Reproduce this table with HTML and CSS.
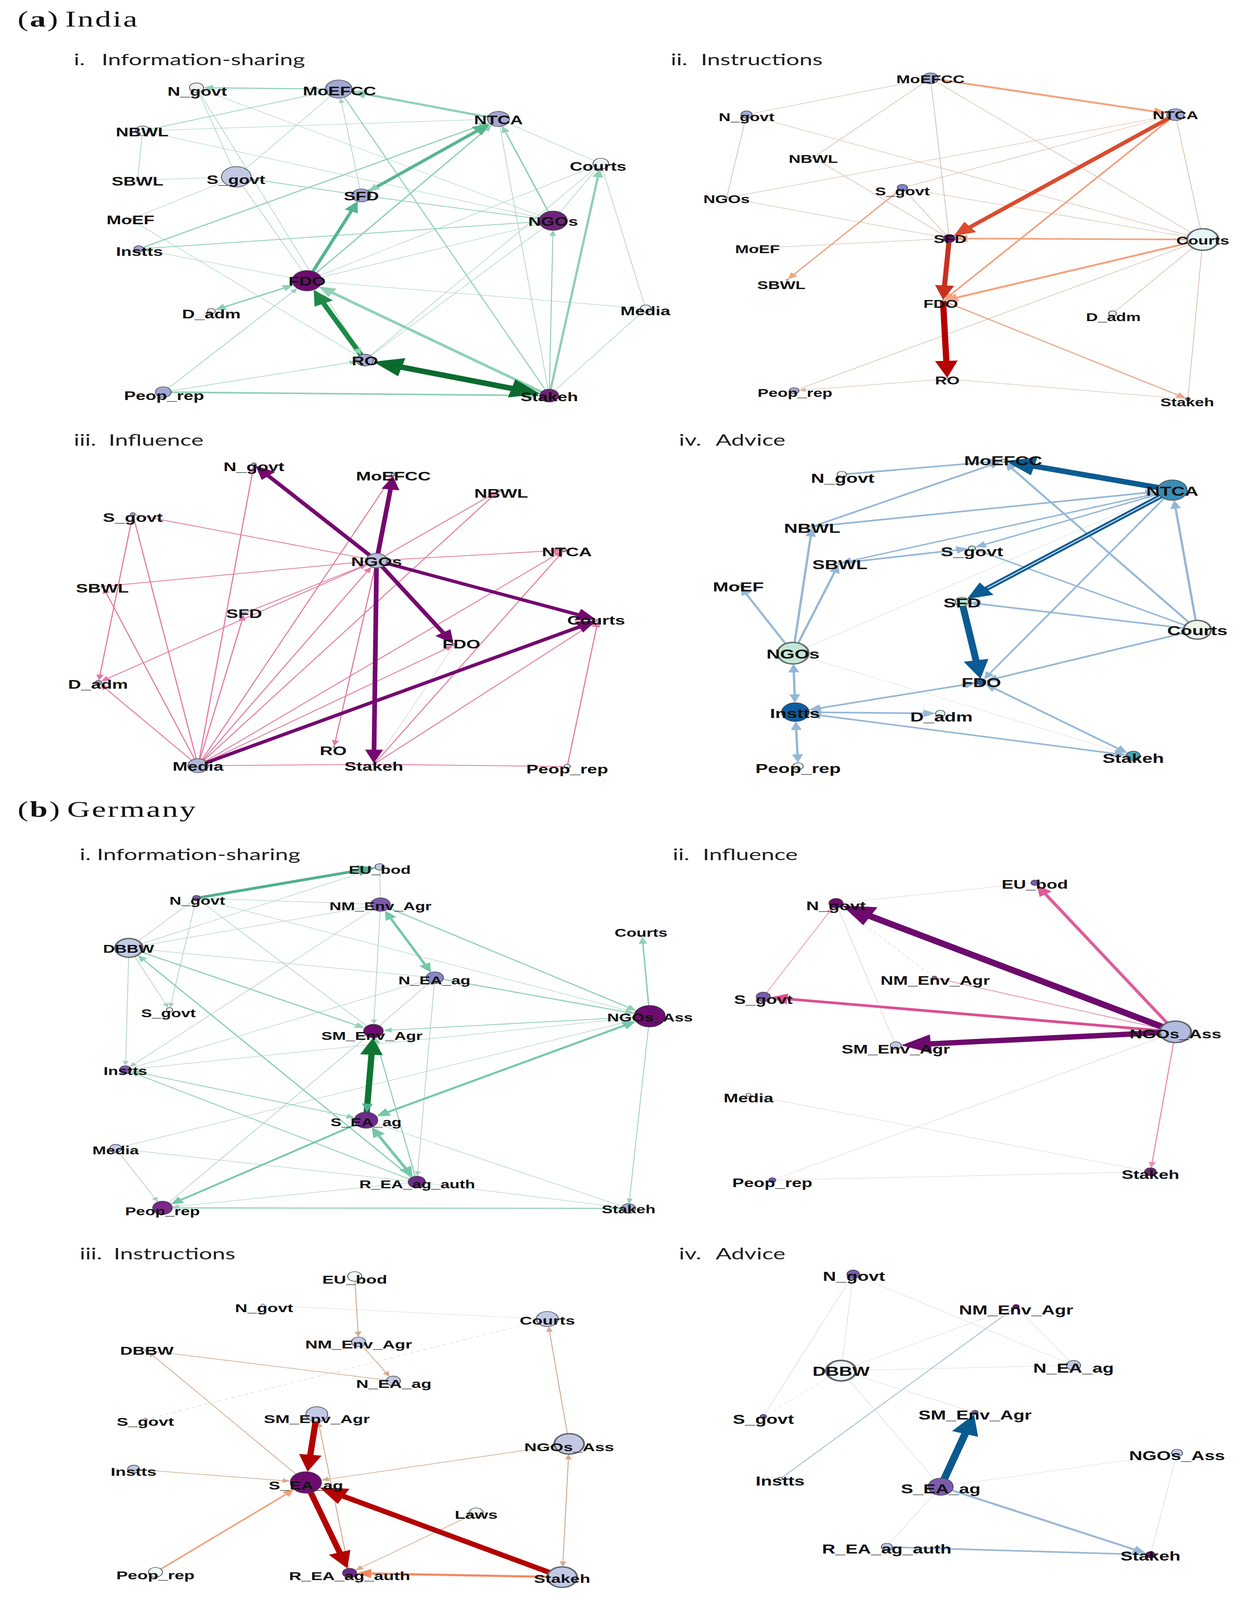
FILE: index.html
```html
<!DOCTYPE html>
<html lang="en">
<head>
<meta charset="utf-8">
<title>Policy networks — (a) India, (b) Germany</title>
<link rel="stylesheet" href="styles.css">
</head>
<body>
<div class="page">
<main class="figure" id="figure">
  <h2 class="country-head head-a">(<b>a</b>) India</h2>
  <div class="row row-1">
    <figure class="panel">
      <figcaption class="caption cap-a1"><span class="num">i.</span>Information-sharing</figcaption>
      <svg class="net" id="a1" role="img" aria-label="India information-sharing network"></svg>
    </figure>
    <figure class="panel">
      <figcaption class="caption cap-a2"><span class="num">ii.</span>Instructions</figcaption>
      <svg class="net" id="a2" role="img" aria-label="India instructions network"></svg>
    </figure>
  </div>
  <div class="row row-2">
    <figure class="panel">
      <figcaption class="caption cap-a3"><span class="num">iii.</span>Influence</figcaption>
      <svg class="net" id="a3" role="img" aria-label="India influence network"></svg>
    </figure>
    <figure class="panel">
      <figcaption class="caption cap-a4"><span class="num">iv.</span>Advice</figcaption>
      <svg class="net" id="a4" role="img" aria-label="India advice network"></svg>
    </figure>
  </div>

  <h2 class="country-head head-b">(<b>b</b>) Germany</h2>
  <div class="row row-3">
    <figure class="panel">
      <figcaption class="caption cap-b1"><span class="num">i.</span>Information-sharing</figcaption>
      <svg class="net" id="b1" role="img" aria-label="Germany information-sharing network"></svg>
    </figure>
    <figure class="panel">
      <figcaption class="caption cap-b2"><span class="num">ii.</span>Influence</figcaption>
      <svg class="net" id="b2" role="img" aria-label="Germany influence network"></svg>
    </figure>
  </div>
  <div class="row row-4">
    <figure class="panel">
      <figcaption class="caption cap-b3"><span class="num">iii.</span>Instructions</figcaption>
      <svg class="net" id="b3" role="img" aria-label="Germany instructions network"></svg>
    </figure>
    <figure class="panel">
      <figcaption class="caption cap-b4"><span class="num">iv.</span>Advice</figcaption>
      <svg class="net" id="b4" role="img" aria-label="Germany advice network"></svg>
    </figure>
  </div>
</main>
</div>
<script src="script.js"></script>
</body>
</html>
```

FILE: styles.css
```css
* { box-sizing: border-box; }

html, body {
  margin: 0;
  padding: 0;
  background: #ffffff;
}

body {
  width: 3187px;
  font-family: "Liberation Sans", Arial, sans-serif;
  color: #111111;
}

/* the page frame: the figure is fitted into the visible window height */
.page {
  width: 3187px;
  height: 100vh;
  overflow: hidden;
}

.figure {
  display: flex;
  flex-direction: column;
  width: 3187px;
  height: 5945px;
  transform: scaleY(var(--fit, 1));
  transform-origin: 0 0;
}

.country-head {
  flex: none;
  margin: 0;
  padding-left: 45px;
  font-family: "Liberation Serif", "Times New Roman", serif;
  font-size: 82px;
  line-height: 82px;
  font-weight: 400;
  letter-spacing: 4px;
  word-spacing: -10px;
  color: #111111;
  white-space: nowrap;
}

.country-head b { font-weight: 700; }

.head-a { height: 160px; padding-top: 30px; }
.head-b { height: 130px; padding-top: 37px; }

.row {
  flex: none;
  display: grid;
  grid-template-columns: 1590px 1597px;
}

.row-1 { height: 1400px; }
.row-2 { height: 1370px; }
.row-3 { height: 1480px; }
.row-4 { height: 1405px; }

.panel {
  margin: 0;
  display: flex;
  flex-direction: column;
  min-height: 0;
}

.caption {
  flex: none;
  font-family: Lato, "Open Sans", sans-serif;
  font-size: 60px;
  line-height: 60px;
  color: #1e1e1e;
  white-space: nowrap;
}

.caption .num { display: inline-block; }

.row-1 .caption { height: 100px; padding-top: 29px; }
.row-2 .caption { height: 110px; padding-top: 43px; }
.row-3 .caption { height: 155px; padding-top: 83px; }
.row-4 .caption { height: 160px; padding-top: 86px; }

.cap-a1 { padding-left: 189px; }
.cap-a1 .num { width: 71px; }
.cap-a2 { padding-left: 127px; }
.cap-a2 .num { width: 77px; }
.cap-a3 { padding-left: 189px; }
.cap-a3 .num { width: 89px; }
.cap-a4 { padding-left: 148px; }
.cap-a4 .num { width: 94px; }
.cap-b1 { padding-left: 204px; }
.cap-b1 .num { width: 44px; }
.cap-b2 { padding-left: 132px; }
.cap-b2 .num { width: 77px; }
.cap-b3 { padding-left: 204px; }
.cap-b3 .num { width: 87px; }
.cap-b4 { padding-left: 148px; }
.cap-b4 .num { width: 94px; }

.net {
  flex: 1;
  display: block;
  width: 100%;
  min-height: 0;
  overflow: visible;
}

.net .label {
  font-family: "Liberation Sans", Arial, sans-serif;
  font-weight: 700;
  fill: #111111;
}
```

FILE: script.js
```javascript
(function () {
  var NS = 'http://www.w3.org/2000/svg';
  var FIG_H = 5945;

  var P0 = '#eef0f8', P1 = '#c3c9e5', P2 = '#a2a8d2', P3 = '#8589c6',
      P4 = '#7d5aae', P5 = '#6e2378', P6 = '#6d0c6e', PM = '#6f2a8c';
  var G0 = '#e6f4e8', G1 = '#c4e6d6';

  function n(x, y, r, fill, lx, ly, sw) {
    return { x: x, y: y, r: r, fill: fill, lx: lx, ly: ly, sw: sw || 2 };
  }

  var gT = '#a9d3c3', gL = '#8fd0b6', gM = '#55b58d', gD = '#1d8a47', gDD = '#0b6b2f';
  var gT2 = '#a9cdc1', gB = '#74c7a8', gS = '#4fb18a';
  var oT = '#d4b9a4';
  var pk = '#e27aa2', pu = '#74086f';
  var bl = '#95b7d6', bD = '#0c5b92', bT = '#cdd4da';
  var t1 = 1.8;

  var panels = [
    {
      id: 'a1', fs: 45,
      nodes: {
        N_govt: n(503, 326, 18, P0, 505, 340),
        MoEFCC: n(867, 331, 34, P2, 869, 338),
        NTCA: n(1276, 442, 28, P2, 1276, 446),
        NBWL: n(365, 486, 18, P0, 364, 490),
        Courts: n(1538, 608, 20, P0, 1531, 618),
        SBWL: n(352, 670, 4, P1, 352, 673),
        S_govt: n(605, 657, 38, P1, 604, 668),
        SFD: n(925, 726, 24, P2, 925, 728),
        MoEF: n(334, 815, 4, P1, 334, 817),
        NGOs: n(1416, 820, 36, P5, 1416, 823),
        Instts: n(355, 925, 12, P2, 357, 934),
        FDO: n(786, 1043, 38, P6, 786, 1045),
        D_adm: n(541, 1156, 10, P0, 541, 1167),
        Media: n(1653, 1147, 14, P0, 1652, 1155),
        RO: n(934, 1338, 22, P2, 934, 1341),
        Peop_rep: n(418, 1457, 20, P2, 420, 1470),
        Stakeh: n(1406, 1470, 24, P5, 1406, 1474)
      },
      edges: [
        ['NBWL', 'NTCA', t1, gT, 0], ['NBWL', 'SBWL', t1, gT, 0], ['SBWL', 'S_govt', t1, gT, 0],
        ['N_govt', 'S_govt', t1, gT, 0], ['N_govt', 'NGOs', t1, gT, 0], ['N_govt', 'RO', t1, gT, 0],
        ['NBWL', 'NGOs', t1, gT, 0], ['S_govt', 'MoEFCC', t1, gT, 0], ['S_govt', 'MoEF', t1, gT, 0],
        ['S_govt', 'RO', t1, gT, 0], ['SFD', 'MoEFCC', t1, gT, 1], ['Instts', 'FDO', t1, gT, 0],
        ['MoEF', 'RO', t1, gT, 0], ['FDO', 'Media', t1, gT, 0], ['FDO', 'Courts', t1, gT, 0],
        ['FDO', 'NGOs', t1, gT, 0], ['NTCA', 'Stakeh', t1, gT, 0], ['Courts', 'Media', t1, gT, 0],
        ['Media', 'Stakeh', t1, gT, 0], ['RO', 'NGOs', t1, gT, 0], ['RO', 'Courts', t1, gT, 0],
        ['Courts', 'NGOs', t1, gT, 0], ['NTCA', 'Courts', t1, gT, 0],
        ['S_govt', 'SFD', 3, gL, 0], ['SFD', 'NGOs', 3, gL, 0], ['Instts', 'NGOs', 3, gL, 0],
        ['MoEFCC', 'Stakeh', 3, gL, 0], ['MoEFCC', 'NBWL', 2.5, gL, 0], ['Stakeh', 'NGOs', 2.5, gL, 1],
        ['Peop_rep', 'FDO', 2, gL, 1], ['Peop_rep', 'RO', 2, gL, 1], ['MoEFCC', 'N_govt', 4, gL, 1],
        ['FDO', 'NTCA', 4, gL, 1], ['Instts', 'NTCA', 4, gL, 1], ['NGOs', 'NTCA', 4, gL, 1],
        ['D_adm', 'FDO', 5, gL, 2], ['Stakeh', 'Courts', 6, gL, 1], ['Peop_rep', 'Stakeh', 6, gL, 1],
        ['NTCA', 'MoEFCC', 8, gL, 1], ['Stakeh', 'FDO', 9, gL, 1], ['FDO', 'SFD', 9, gM, 1],
        ['SFD', 'NTCA', 10, gM, 1], ['NTCA', 'SFD', 5, gL, 1, 'head'],
        ['RO', 'FDO', 14, gD, 1], ['FDO', 'RO', 4, gL, 1, 'head'],
        ['Stakeh', 'RO', 20, gDD, 2]
      ]
    },
    {
      id: 'a2', fs: 42,
      nodes: {
        MoEFCC: n(2382, 291, 20, P2, 2382, 294),
        N_govt: n(1911, 426, 14, P2, 1911, 435),
        NTCA: n(3009, 426, 22, P2, 3009, 428),
        NBWL: n(2082, 585, 3, P1, 2082, 590),
        S_govt: n(2310, 698, 13, '#7d86c6', 2310, 710),
        NGOs: n(1860, 735, 3, P1, 1860, 740),
        SFD: n(2430, 886, 15, P6, 2432, 888),
        Courts: n(3079, 890, 40, '#e8f5f8', 3079, 894, 5),
        MoEF: n(1939, 922, 3, P1, 1939, 925),
        SBWL: n(2015, 1040, 3, P1, 2000, 1059),
        FDO: n(2414, 1118, 4, P1, 2408, 1128),
        D_adm: n(2848, 1165, 10, P0, 2850, 1178),
        RO: n(2425, 1408, 4, P1, 2425, 1413),
        Peop_rep: n(2033, 1452, 12, P2, 2035, 1460),
        Stakeh: n(3041, 1483, 6, P2, 3039, 1495)
      },
      edges: [
        ['MoEFCC', 'N_govt', t1, oT, 0], ['MoEFCC', 'NBWL', t1, oT, 0], ['MoEFCC', 'SFD', t1, oT, 0],
        ['MoEFCC', 'Courts', t1, oT, 0], ['N_govt', 'NGOs', t1, oT, 0], ['N_govt', 'Courts', t1, oT, 0],
        ['NBWL', 'SFD', t1, oT, 0], ['NGOs', 'NTCA', t1, oT, 0], ['NGOs', 'SFD', t1, oT, 0],
        ['S_govt', 'NTCA', t1, oT, 0], ['S_govt', 'SFD', t1, oT, 0], ['S_govt', 'Courts', t1, oT, 0],
        ['MoEF', 'SFD', t1, oT, 0], ['NTCA', 'Courts', t1, oT, 0], ['Courts', 'D_adm', t1, oT, 0],
        ['Courts', 'Stakeh', t1, oT, 0], ['Peop_rep', 'Courts', t1, oT, 0], ['RO', 'Peop_rep', t1, oT, 1],
        ['RO', 'Stakeh', t1, oT, 0],
        ['S_govt', 'SBWL', 4, '#eba584', 1], ['FDO', 'Stakeh', 4, '#e6a88a', 1],
        ['NTCA', 'FDO', 5, '#f2a17d', 1], ['Courts', 'SFD', 6, '#f3a37e', 1],
        ['Courts', 'FDO', 7, '#f3a37e', 1], ['MoEFCC', 'NTCA', 7, '#f3a37e', 1],
        ['NTCA', 'SFD', 13, '#dc4b2e', 1], ['SFD', 'FDO', 13, '#c8301f', 1], ['FDO', 'RO', 16, '#b30000', 1]
      ]
    },
    {
      id: 'a3', fs: 46,
      nodes: {
        N_govt: n(650, 1726, 6, P2, 650, 1734),
        MoEFCC: n(1007, 1763, 6, P2, 1007, 1768),
        NBWL: n(1276, 1824, 5, P2, 1283, 1832),
        S_govt: n(340, 1911, 6, P2, 340, 1923),
        NTCA: n(1444, 2044, 6, P2, 1451, 2050),
        NGOs: n(964, 2083, 27, '#b5bdd9', 964, 2087, 3),
        SBWL: n(263, 2179, 5, P2, 262, 2185),
        SFD: n(625, 2279, 5, P2, 625, 2279),
        Courts: n(1531, 2304, 5, P2, 1526, 2304),
        FDO: n(1163, 2396, 4, P2, 1181, 2393),
        D_adm: n(252, 2536, 8, P2, 251, 2542),
        RO: n(855, 2775, 3, P2, 853, 2789),
        Media: n(507, 2845, 26, '#aeb8da', 507, 2847),
        Stakeh: n(957, 2840, 4, P2, 957, 2847),
        Peop_rep: n(1452, 2848, 8, P0, 1452, 2857)
      },
      edges: [
        ['FDO', 'Stakeh', 1.2, '#c8c8c8', 0],
        ['S_govt', 'NGOs', 3, pk, 0], ['S_govt', 'D_adm', 3, pk, 1], ['S_govt', 'Media', 3, pk, 0],
        ['Media', 'N_govt', 3, pk, 1], ['NGOs', 'SBWL', 3, pk, 0], ['Media', 'SBWL', 3, pk, 1],
        ['Media', 'D_adm', 3, pk, 1], ['Media', 'SFD', 3, pk, 1], ['Media', 'NGOs', 3, pk, 1],
        ['SFD', 'NGOs', 3, pk, 1], ['NGOs', 'D_adm', 3, pk, 1], ['Media', 'MoEFCC', 3, pk, 1],
        ['Media', 'NBWL', 3, pk, 1], ['Media', 'NTCA', 3, pk, 1], ['Media', 'FDO', 3, pk, 1],
        ['Media', 'Stakeh', 3, pk, 0], ['Stakeh', 'Peop_rep', 3, pk, 0], ['Peop_rep', 'Courts', 3, pk, 1],
        ['Stakeh', 'Courts', 3, pk, 1], ['Stakeh', 'NTCA', 3, pk, 1], ['NGOs', 'RO', 3, pk, 1],
        ['NGOs', 'NTCA', 3, pk, 1], ['NGOs', 'NBWL', 3, pk, 1],
        ['NGOs', 'N_govt', 12, pu, 1], ['NGOs', 'MoEFCC', 12, pu, 1], ['NGOs', 'FDO', 12, pu, 1],
        ['NGOs', 'Courts', 12, pu, 1], ['NGOs', 'Stakeh', 12, pu, 1], ['Media', 'Courts', 12, pu, 1]
      ]
    },
    {
      id: 'a4', fs: 48,
      nodes: {
        MoEFCC: n(2568, 1712, 6, G0, 2568, 1712),
        N_govt: n(2155, 1763, 12, G0, 2157, 1776),
        NTCA: n(3001, 1821, 38, '#3a8db6', 3001, 1824),
        NBWL: n(2079, 1957, 5, G1, 2079, 1962),
        S_govt: n(2488, 2037, 9, G1, 2488, 2049),
        SBWL: n(2148, 2093, 5, G1, 2150, 2098),
        MoEF: n(1894, 2177, 4, G1, 1890, 2180),
        SFD: n(2462, 2236, 17, '#b8e0d0', 2463, 2240),
        Courts: n(3065, 2340, 35, '#eef6ea', 3065, 2343, 5),
        NGOs: n(2030, 2427, 40, G1, 2030, 2430, 5),
        FDO: n(2512, 2534, 12, '#1a5f9e', 2512, 2536),
        Instts: n(2036, 2646, 35, '#0d5ea3', 2035, 2651),
        D_adm: n(2407, 2651, 12, G0, 2410, 2663),
        Stakeh: n(2901, 2809, 18, '#4ba4b5', 2901, 2817),
        Peop_rep: n(2043, 2847, 13, G0, 2043, 2855)
      },
      edges: [
        ['NGOs', 'NTCA', 1.2, bT, 0], ['NGOs', 'Stakeh', 1.2, bT, 0],
        ['N_govt', 'MoEFCC', 6, bl, 1], ['NBWL', 'MoEFCC', 6, bl, 1], ['NBWL', 'NTCA', 6, bl, 1],
        ['NTCA', 'SBWL', 5, bl, 1], ['NTCA', 'S_govt', 5, bl, 1], ['SBWL', 'S_govt', 6, bl, 1],
        ['NTCA', 'FDO', 5, bl, 1], ['Courts', 'NTCA', 6, bl, 1], ['Courts', 'MoEFCC', 6, bl, 1],
        ['Courts', 'SFD', 6, bl, 1], ['Courts', 'S_govt', 5, bl, 0], ['Courts', 'FDO', 6, bl, 1],
        ['NGOs', 'NBWL', 6, bl, 1], ['NGOs', 'SBWL', 6, bl, 1], ['NGOs', 'MoEF', 6, bl, 1],
        ['NGOs', 'Instts', 6, bl, 2], ['Instts', 'Peop_rep', 6, bl, 2], ['Instts', 'FDO', 6, bl, 2],
        ['Instts', 'D_adm', 6, bl, 1], ['Stakeh', 'Instts', 6, bl, 2], ['Stakeh', 'FDO', 6, bl, 2],
        ['NTCA', 'MoEFCC', 20, bD, 1], ['NTCA', 'SFD', 16, bD, 1, 'stripe'], ['SFD', 'FDO', 18, bD, 1]
      ]
    },
    {
      id: 'b1', fs: 42,
      nodes: {
        EU_bod: n(972, 3221, 12, P1, 972, 3232),
        N_govt: n(503, 3337, 10, P4, 505, 3346),
        NM_Env_Agr: n(974, 3361, 25, P4, 974, 3367),
        DBBW: n(330, 3522, 35, '#c4cbe6', 329, 3525, 5),
        Courts: n(1644, 3478, 4, P0, 1641, 3466),
        N_EA_ag: n(1113, 3633, 22, P3, 1112, 3642),
        S_govt: n(434, 3752, 8, P0, 431, 3765),
        NGOs_Ass: n(1663, 3776, 40, P6, 1664, 3780),
        SM_Env_Agr: n(956, 3831, 25, P6, 952, 3849),
        Instts: n(321, 3975, 15, P4, 321, 3979),
        S_EA_ag: n(937, 4162, 30, PM, 937, 4170),
        Media: n(296, 4267, 15, P1, 296, 4274),
        R_EA_ag_auth: n(1067, 4392, 22, PM, 1068, 4400),
        Peop_rep: n(416, 4488, 25, '#7a2a8a', 416, 4500),
        Stakeh: n(1609, 4490, 18, P2, 1609, 4493)
      },
      edges: [
        ['N_govt', 'DBBW', t1, gT2, 0], ['N_govt', 'S_govt', t1, gT2, 1], ['N_govt', 'NM_Env_Agr', t1, gT2, 0],
        ['N_govt', 'SM_Env_Agr', t1, gT2, 0], ['N_govt', 'NGOs_Ass', t1, gT2, 0], ['DBBW', 'EU_bod', t1, gT2, 0],
        ['DBBW', 'NM_Env_Agr', t1, gT2, 0], ['DBBW', 'N_EA_ag', t1, gT2, 0], ['DBBW', 'S_govt', t1, gT2, 1],
        ['DBBW', 'Instts', t1, gT2, 1], ['DBBW', 'R_EA_ag_auth', t1, '#c3d3cd', 0, 'dash'],
        ['EU_bod', 'NM_Env_Agr', t1, gT2, 0], ['NM_Env_Agr', 'SM_Env_Agr', t1, gT2, 1],
        ['NM_Env_Agr', 'Instts', t1, gT2, 1], ['N_EA_ag', 'Instts', t1, gT2, 0],
        ['N_EA_ag', 'SM_Env_Agr', t1, gT2, 0], ['N_EA_ag', 'R_EA_ag_auth', t1, gT2, 1],
        ['SM_Env_Agr', 'Peop_rep', t1, gT2, 0], ['Media', 'NGOs_Ass', t1, gT2, 0],
        ['Media', 'Peop_rep', t1, gT2, 1], ['Media', 'R_EA_ag_auth', t1, gT2, 0],
        ['R_EA_ag_auth', 'Stakeh', t1, gT2, 0], ['S_EA_ag', 'Stakeh', t1, gT2, 0],
        ['R_EA_ag_auth', 'Peop_rep', t1, gT2, 1], ['Instts', 'NGOs_Ass', t1, gT2, 0],
        ['NGOs_Ass', 'Stakeh', 2, gL, 1], ['NGOs_Ass', 'SM_Env_Agr', 3, gL, 1], ['Instts', 'S_EA_ag', 3, gL, 2],
        ['R_EA_ag_auth', 'Instts', 3, gL, 1], ['R_EA_ag_auth', 'SM_Env_Agr', 3, gL, 1],
        ['DBBW', 'SM_Env_Agr', 4, gL, 1], ['R_EA_ag_auth', 'DBBW', 4, gL, 1],
        ['NM_Env_Agr', 'NGOs_Ass', 4, gL, 1], ['N_EA_ag', 'NGOs_Ass', 4, gL, 1],
        ['NGOs_Ass', 'Courts', 4, gL, 1], ['Peop_rep', 'Stakeh', 4, gL, 0],
        ['S_EA_ag', 'Peop_rep', 6, gB, 1], ['NGOs_Ass', 'S_EA_ag', 7, gB, 2],
        ['S_EA_ag', 'R_EA_ag_auth', 8, gB, 2], ['NM_Env_Agr', 'N_EA_ag', 7, gB, 2],
        ['N_govt', 'EU_bod', 10, gS, 1],
        ['S_EA_ag', 'SM_Env_Agr', 16, '#0f7533', 1], ['SM_Env_Agr', 'S_EA_ag', 6, gS, 1, 'head']
      ]
    },
    {
      id: 'b2', fs: 45,
      nodes: {
        EU_bod: n(2649, 3280, 10, P4, 2649, 3286),
        N_govt: n(2140, 3356, 18, P6, 2140, 3366),
        NM_Env_Agr: n(2392, 3633, 6, P4, 2394, 3643),
        S_govt: n(1954, 3704, 18, P4, 1954, 3714),
        NGOs_Ass: n(3009, 3834, 40, '#b1bce0', 3009, 3841, 5),
        SM_Env_Agr: n(2293, 3885, 14, P1, 2293, 3898),
        Media: n(1916, 4068, 6, P0, 1916, 4079),
        Stakeh: n(2945, 4354, 15, P5, 2945, 4364),
        Peop_rep: n(1977, 4385, 9, P4, 1977, 4395)
      },
      edges: [
        ['N_govt', 'EU_bod', 1.4, '#d9cdc6', 0], ['N_govt', 'NM_Env_Agr', 1.4, '#d9cdc6', 0, 'dash'],
        ['N_govt', 'SM_Env_Agr', 1.4, '#d9cdc6', 0], ['Media', 'Stakeh', 1.4, '#d9cdc6', 0],
        ['Peop_rep', 'NGOs_Ass', 1.4, '#d9cdc6', 0], ['Peop_rep', 'Stakeh', 1.4, '#d9cdc6', 0],
        ['S_govt', 'N_govt', 2.5, '#e9a3c1', 1], ['NGOs_Ass', 'NM_Env_Agr', 3, '#e58fb3', 0],
        ['NGOs_Ass', 'Stakeh', 3, '#e58fb3', 1],
        ['NGOs_Ass', 'EU_bod', 9, '#de5c9b', 1], ['NGOs_Ass', 'S_govt', 10, '#db4f93', 1],
        ['NGOs_Ass', 'N_govt', 22, '#6d0a6d', 1], ['NGOs_Ass', 'SM_Env_Agr', 20, '#6d0a6d', 1]
      ]
    },
    {
      id: 'b3', fs: 44,
      nodes: {
        EU_bod: n(908, 4743, 18, '#eef8f4', 908, 4753),
        N_govt: n(673, 4850, 5, P1, 676, 4860),
        Courts: n(1401, 4901, 28, P1, 1401, 4906),
        NM_Env_Agr: n(918, 4986, 18, P1, 918, 4995),
        DBBW: n(376, 5018, 5, P1, 376, 5018),
        N_EA_ag: n(1007, 5131, 18, P1, 1008, 5141),
        S_govt: n(372, 5274, 5, P1, 372, 5282),
        SM_Env_Agr: n(811, 5255, 28, P1, 811, 5272),
        NGOs_Ass: n(1457, 5365, 38, P1, 1457, 5376, 5),
        Instts: n(342, 5459, 15, P1, 342, 5467),
        S_EA_ag: n(783, 5508, 40, P6, 783, 5518),
        Laws: n(1219, 5621, 18, '#eef8f4', 1219, 5628),
        Peop_rep: n(398, 5842, 18, '#eef8f4', 398, 5852),
        R_EA_ag_auth: n(895, 5845, 18, PM, 895, 5855),
        Stakeh: n(1439, 5860, 38, P1, 1439, 5865, 5)
      },
      edges: [
        ['N_govt', 'Courts', 1.4, '#d8d8d8', 0], ['S_govt', 'Courts', 1.4, '#cccccc', 0, 'dash'],
        ['EU_bod', 'NM_Env_Agr', 2.5, '#d6ab8e', 1], ['NM_Env_Agr', 'N_EA_ag', 2.5, '#d6ab8e', 1],
        ['DBBW', 'N_EA_ag', 2.5, '#d6ab8e', 0], ['S_EA_ag', 'DBBW', 2.5, '#d6ab8e', 1],
        ['Instts', 'S_EA_ag', 2.5, '#d6ab8e', 1], ['NGOs_Ass', 'S_EA_ag', 2.5, '#d6ab8e', 1],
        ['NGOs_Ass', 'Courts', 2.5, '#d6ab8e', 1], ['Stakeh', 'NGOs_Ass', 2.5, '#d6ab8e', 2],
        ['R_EA_ag_auth', 'SM_Env_Agr', 2.5, '#d6ab8e', 1], ['Laws', 'R_EA_ag_auth', 2.5, '#d6ab8e', 1],
        ['Peop_rep', 'S_EA_ag', 5, '#f0a07a', 1], ['Stakeh', 'R_EA_ag_auth', 8, '#f4895f', 1],
        ['SM_Env_Agr', 'S_EA_ag', 16, '#b30000', 1], ['S_EA_ag', 'R_EA_ag_auth', 16, '#b30000', 1],
        ['Stakeh', 'S_EA_ag', 18, '#b30000', 1]
      ]
    },
    {
      id: 'b4', fs: 47,
      nodes: {
        N_govt: n(2184, 4735, 16, P4, 2186, 4743),
        NM_Env_Agr: n(2601, 4855, 8, P6, 2601, 4867),
        DBBW: n(2153, 5093, 38, '#eef8f8', 2153, 5095, 6),
        N_EA_ag: n(2748, 5073, 18, P1, 2748, 5083),
        S_govt: n(1954, 5263, 8, P4, 1954, 5274),
        SM_Env_Agr: n(2496, 5248, 8, P4, 2496, 5258),
        NGOs_Ass: n(3013, 5399, 14, P1, 3013, 5409),
        Instts: n(1997, 5495, 6, P0, 1997, 5503),
        S_EA_ag: n(2408, 5524, 32, P4, 2408, 5532),
        R_EA_ag_auth: n(2270, 5748, 14, P1, 2270, 5756),
        Stakeh: n(2945, 5777, 12, P6, 2945, 5782)
      },
      edges: [
        ['N_govt', 'DBBW', 1.4, '#d2d8de', 0], ['N_govt', 'S_govt', 1.4, '#d2d8de', 0],
        ['N_govt', 'N_EA_ag', 1.4, '#d2d8de', 0], ['NM_Env_Agr', 'DBBW', 1.4, '#d2d8de', 0],
        ['NM_Env_Agr', 'N_EA_ag', 1.4, '#d2d8de', 0], ['DBBW', 'N_EA_ag', 1.4, '#d2d8de', 0],
        ['DBBW', 'S_govt', 1.4, '#d2d8de', 0, 'dash'], ['DBBW', 'SM_Env_Agr', 1.4, '#d2d8de', 0],
        ['DBBW', 'S_EA_ag', 1.4, '#d2d8de', 0], ['S_EA_ag', 'NGOs_Ass', 1.4, '#d2d8de', 0],
        ['S_EA_ag', 'R_EA_ag_auth', 1.4, '#d2d8de', 0], ['NGOs_Ass', 'Stakeh', 1.4, '#d2d8de', 0],
        ['Instts', 'NM_Env_Agr', 3, '#a9c1d9', 0], ['R_EA_ag_auth', 'Stakeh', 6, '#9ab8d6', 0],
        ['S_EA_ag', 'Stakeh', 7, '#9ab8d6', 1], ['S_EA_ag', 'SM_Env_Agr', 20, '#0b5a8e', 1]
      ]
    }
  ];

  function el(tag, attrs) {
    var e = document.createElementNS(NS, tag);
    for (var k in attrs) { if (attrs.hasOwnProperty(k)) e.setAttribute(k, attrs[k]); }
    return e;
  }

  function f(v) { return Math.round(v * 10) / 10; }

  function drawEdge(g, A, B, w, color, ar, opt) {
    var dx = B.x - A.x, dy = B.y - A.y, len = Math.sqrt(dx * dx + dy * dy);
    if (!len) return;
    var ux = dx / len, uy = dy / len;
    var L = 12 + 3.2 * w, H = 5 + 1.5 * w;
    var sx = A.x, sy = A.y, ex = B.x, ey = B.y;
    var heads = [];
    if (ar >= 1) {
      var tx = B.x - ux * B.r, ty = B.y - uy * B.r;
      heads.push([tx, ty, ux, uy]);
      ex = tx - ux * L * 0.85; ey = ty - uy * L * 0.85;
    }
    if (ar === 2) {
      var qx = A.x + ux * A.r, qy = A.y + uy * A.r;
      heads.push([qx, qy, -ux, -uy]);
      sx = qx + ux * L * 0.85; sy = qy + uy * L * 0.85;
    }
    if (opt !== 'head') {
      var line = el('line', {
        x1: f(sx), y1: f(sy), x2: f(ex), y2: f(ey),
        stroke: color, 'stroke-width': w, 'stroke-linecap': 'butt'
      });
      if (opt === 'dash') line.setAttribute('stroke-dasharray', '10 8');
      g.appendChild(line);
      if (opt === 'stripe') {
        g.appendChild(el('line', {
          x1: f(sx), y1: f(sy), x2: f(ex - ux * L * 0.2), y2: f(ey - uy * L * 0.2),
          stroke: '#dfe9f3', 'stroke-width': Math.max(2, w * 0.2)
        }));
      }
    }
    heads.forEach(function (h) {
      var tx = h[0], ty = h[1], vx = h[2], vy = h[3];
      var bx = tx - vx * L, by = ty - vy * L;
      var px = -vy, py = vx;
      g.appendChild(el('polygon', {
        points: f(tx) + ',' + f(ty) + ' ' + f(bx + px * H) + ',' + f(by + py * H) + ' ' +
                f(bx - px * H) + ',' + f(by - py * H),
        fill: color
      }));
    });
  }

  function render(p) {
    var svg = document.getElementById(p.id);
    if (!svg) return;
    var rect = svg.getBoundingClientRect();
    var x0 = rect.left + window.scrollX, y0 = rect.top + window.scrollY;
    svg.setAttribute('viewBox', x0 + ' ' + y0 + ' ' + rect.width + ' ' + rect.height);
    svg.setAttribute('preserveAspectRatio', 'none');

    var gE = el('g', { 'class': 'edges' });
    var gN = el('g', { 'class': 'nodes' });
    var gL = el('g', { 'class': 'labels' });

    p.edges.forEach(function (e) {
      var A = p.nodes[e[0]], B = p.nodes[e[1]];
      if (A && B) drawEdge(gE, A, B, e[2], e[3], e[4], e[5]);
    });

    Object.keys(p.nodes).forEach(function (name) {
      var nd = p.nodes[name];
      var sc = nd.sw > 2 ? '#62676b' : '#3f3f4a';
      gN.appendChild(el('circle', {
        cx: nd.x, cy: nd.y, r: nd.r, fill: nd.fill, stroke: sc,
        'stroke-width': nd.r < 6 ? 1 : nd.sw
      }));
      var t = el('text', {
        x: nd.lx, y: f(nd.ly + 0.36 * p.fs), 'text-anchor': 'middle',
        'font-size': p.fs, 'class': 'label'
      });
      t.textContent = name;
      gL.appendChild(t);
    });

    svg.appendChild(gE);
    svg.appendChild(gN);
    svg.appendChild(gL);
  }

  panels.forEach(render);

  // fit the whole figure into the visible window height when the window is shorter
  var fig = document.getElementById('figure');
  var k = Math.min(1, window.innerHeight / FIG_H);
  if (fig && k < 1) fig.style.setProperty('--fit', k.toFixed(5));
})();
```
